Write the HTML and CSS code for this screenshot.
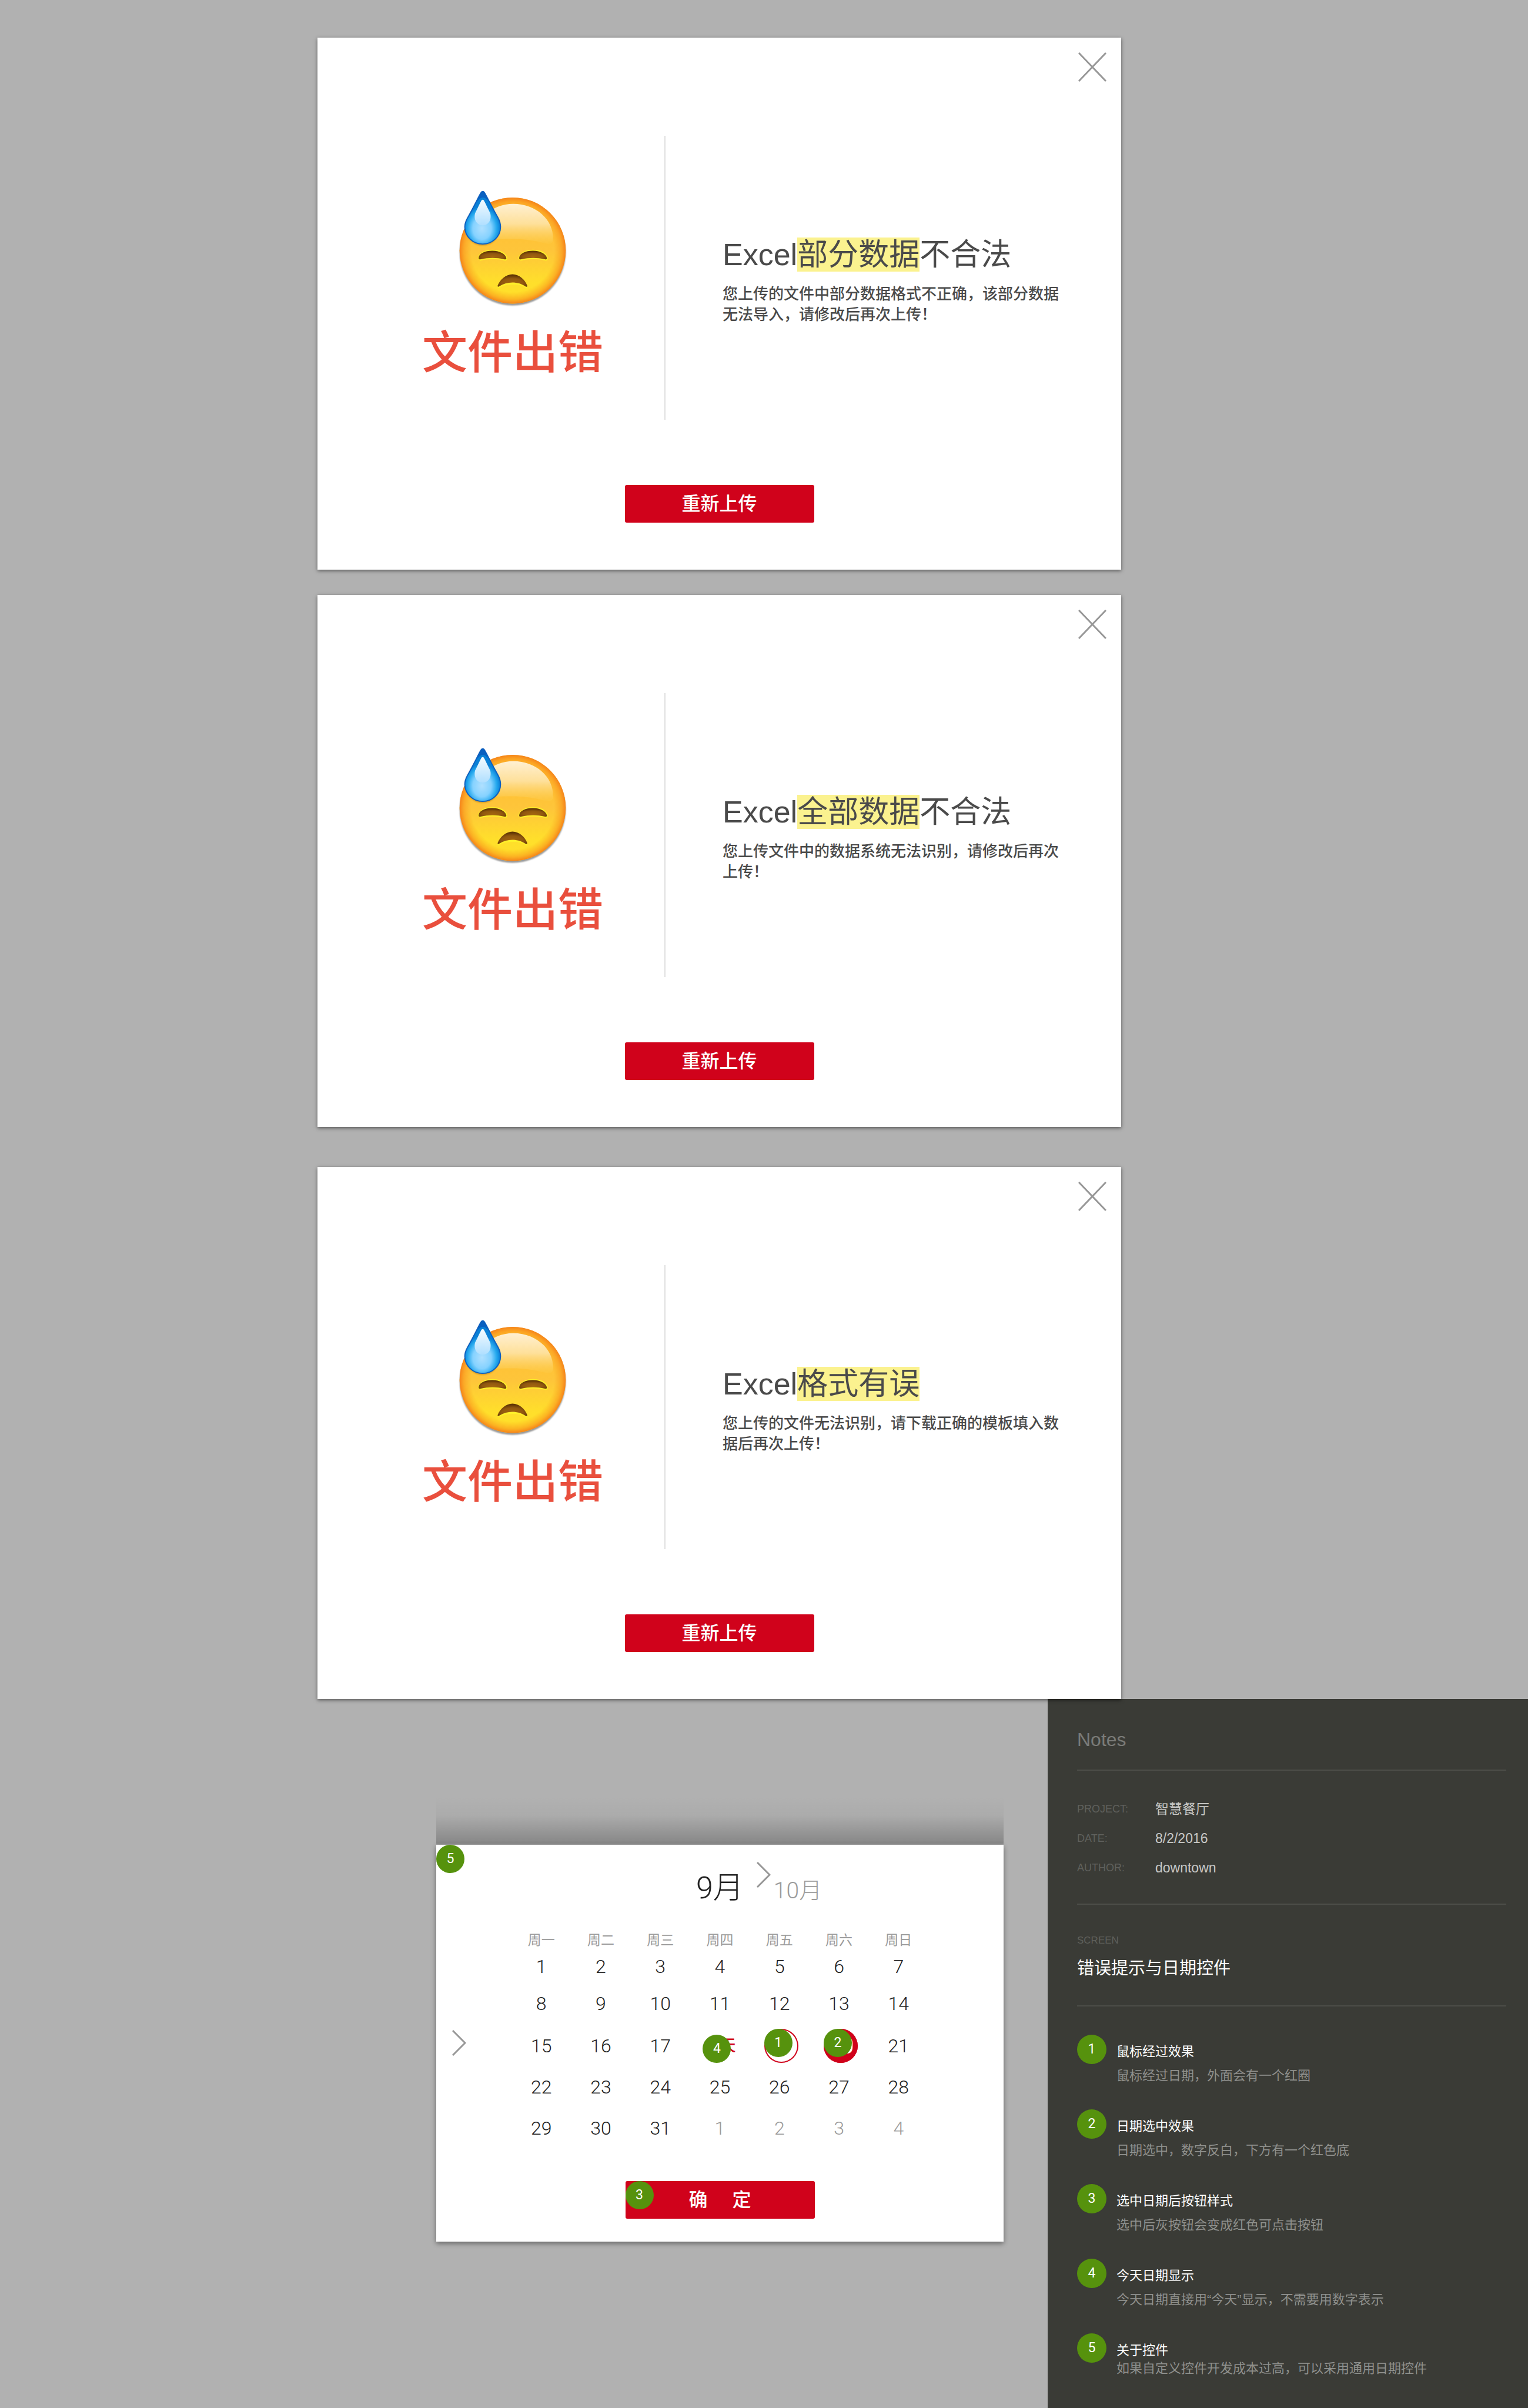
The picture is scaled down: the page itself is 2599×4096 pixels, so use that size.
FILE: index.html
```html
<!DOCTYPE html>
<html lang="zh-CN">
<head>
<meta charset="utf-8">
<meta name="viewport" content="width=device-width, initial-scale=1">
<title>错误提示与日期控件</title>
<link rel="stylesheet" href="styles.css">
</head>
<body>
<svg class="sprite" aria-hidden="true">
  <defs>
    <radialGradient id="face-fill" cx="50%" cy="50%" r="50%">
      <stop offset="0" stop-color="#f7a01c" stop-opacity="0"/>
      <stop offset="0.78" stop-color="#f9a01c" stop-opacity="0"/>
      <stop offset="0.92" stop-color="#f9951c" stop-opacity="0.6"/>
      <stop offset="1" stop-color="#f5821a"/>
    </radialGradient>
    <linearGradient id="face-base" x1="0" y1="0" x2="0" y2="1">
      <stop offset="0" stop-color="#ffbd2e"/>
      <stop offset="0.5" stop-color="#fec53a"/>
      <stop offset="0.8" stop-color="#ffdf2b"/>
      <stop offset="1" stop-color="#ffe02a"/>
    </linearGradient>
    <linearGradient id="face-shine" x1="0" y1="0" x2="0" y2="1">
      <stop offset="0" stop-color="#fff0d2"/>
      <stop offset="0.5" stop-color="#fee09a"/>
      <stop offset="1" stop-color="#fdc840" stop-opacity="0.5"/>
    </linearGradient>
    <radialGradient id="drop-fill" gradientUnits="userSpaceOnUse" cx="238" cy="305" r="116" gradientTransform="translate(0 -60) scale(1 1.2)">
      <stop offset="0" stop-color="#b0e0ff"/>
      <stop offset="0.5" stop-color="#85d2ff"/>
      <stop offset="0.8" stop-color="#25a8ee"/>
      <stop offset="1" stop-color="#0a80d6"/>
    </radialGradient>
    <linearGradient id="drop-shine" x1="0" y1="0" x2="0" y2="1">
      <stop offset="0" stop-color="#f4fbff"/>
      <stop offset="1" stop-color="#b0dfff"/>
    </linearGradient>
    <radialGradient id="brown" cx="50%" cy="70%" r="60%">
      <stop offset="0" stop-color="#a3650f"/>
      <stop offset="0.6" stop-color="#915810"/>
      <stop offset="1" stop-color="#613605"/>
    </radialGradient>
    <filter id="soft" x="-20%" y="-20%" width="140%" height="140%">
      <feGaussianBlur stdDeviation="4"/>
    </filter>
  </defs>
  <symbol id="sweat-face" viewBox="82 66 700 740">
    <circle cx="432" cy="458" r="336" fill="#000" opacity="0.4" filter="url(#soft)"/>
    <circle cx="432" cy="446" r="336" fill="url(#face-base)"/>
    <circle cx="432" cy="446" r="336" fill="url(#face-fill)"/>
    <path d="M200 380C190 250 300 150 436 150C580 150 690 250 688 370C687 398 676 410 640 401C560 381 500 373 430 373C340 373 260 380 200 380Z" fill="url(#face-shine)"/>
    <path d="M222 500C212 500 216 484 226 474C258 438 346 436 382 472C396 486 396 506 384 505C340 492 270 492 228 505Z" fill="none" stroke="#fff02a" stroke-width="10"/>
    <path d="M479 500C469 500 473 484 483 474C515 438 603 436 639 472C653 486 653 506 641 505C597 492 527 492 485 505Z" fill="none" stroke="#fff02a" stroke-width="10"/>
    <path d="M343 678C380 650 480 645 518 678" fill="none" stroke="#fff02a" stroke-width="12" stroke-linecap="round"/>
    <path d="M216 493C218 462 262 446 305 447C350 448 388 466 392 495C392 502 386 504 378 501C330 490 280 490 230 501C221 504 216 502 216 493Z" fill="url(#brown)"/>
    <path d="M473 493C475 462 519 446 562 447C607 448 645 466 649 495C649 502 643 504 635 501C587 490 537 490 487 501C478 504 473 502 473 493Z" fill="url(#brown)"/>
    <path d="M337 668C352 630 388 597 431 596C474 597 510 630 524 668C526 676 519 678 512 672C465 640 397 640 350 671C343 677 335 676 337 668Z" fill="url(#brown)"/>
    <path d="M232 86C238 74 248 74 254 86L342 244C376 310 335 414 242 414C149 414 108 310 142 244Z" fill="#8a4b00" opacity="0.35" filter="url(#soft)"/>
    <path d="M232 79C238 70 247 70 253 79C262 92 300 170 340 240C352 262 355 280 355 296C355 356 304 405 242 405C180 405 129 356 129 296C129 280 134 262 146 240C186 170 222 92 232 79Z" fill="url(#drop-fill)"/>
    <path d="M232 79C238 70 247 70 253 79C262 92 300 170 340 240C352 262 355 280 355 296C355 356 304 405 242 405C180 405 129 356 129 296C129 280 134 262 146 240C186 170 222 92 232 79Z" fill="none" stroke="#0c5fc0" stroke-width="7"/>
    <path d="M231 84C238 72 247 72 254 84L276 130C262 116 256 110 242 110C228 110 220 122 206 136Z" fill="#0a55b8" opacity="0.75"/>
    <path d="M234 129C239 123 245 123 250 129C262 152 278 185 290 210C300 250 280 286 242 286C204 286 184 250 194 210C206 185 222 152 234 129Z" fill="url(#drop-shine)"/>
  </symbol>
  <symbol id="cross" viewBox="0 0 48 50">
    <path d="M1 1L47 49M47 1L1 49" fill="none" stroke="#979797" stroke-width="3"/>
  </symbol>
  <symbol id="chevron" viewBox="0 0 24 44">
    <path d="M1 1L22 22L1 43" fill="none" stroke="#979797" stroke-width="3"/>
  </symbol>
</svg>

<main class="page">
  <div class="dialogs">
    <section class="dialog">
      <button class="dialog-close" type="button" aria-label="关闭"><svg><use href="#cross"/></svg></button>
      <div class="dialog-body">
        <div class="status">
          <svg class="status-face" aria-hidden="true"><use href="#sweat-face"/></svg>
          <p class="status-text">文件出错</p>
        </div>
        <div class="reason">
          <h2 class="reason-title">Excel<mark>部分数据</mark>不合法</h2>
          <p class="reason-text">您上传的文件中部分数据格式不正确，该部分数据无法导入，请修改后再次上传！</p>
        </div>
      </div>
      <button class="action" type="button">重新上传</button>
    </section>

    <section class="dialog">
      <button class="dialog-close" type="button" aria-label="关闭"><svg><use href="#cross"/></svg></button>
      <div class="dialog-body">
        <div class="status">
          <svg class="status-face" aria-hidden="true"><use href="#sweat-face"/></svg>
          <p class="status-text">文件出错</p>
        </div>
        <div class="reason">
          <h2 class="reason-title">Excel<mark>全部数据</mark>不合法</h2>
          <p class="reason-text">您上传文件中的数据系统无法识别，请修改后再次上传！</p>
        </div>
      </div>
      <button class="action" type="button">重新上传</button>
    </section>

    <section class="dialog dialog-last">
      <button class="dialog-close" type="button" aria-label="关闭"><svg><use href="#cross"/></svg></button>
      <div class="dialog-body">
        <div class="status">
          <svg class="status-face" aria-hidden="true"><use href="#sweat-face"/></svg>
          <p class="status-text">文件出错</p>
        </div>
        <div class="reason">
          <h2 class="reason-title">Excel<mark>格式有误</mark></h2>
          <p class="reason-text">您上传的文件无法识别，请下载正确的模板填入数据后再次上传！</p>
        </div>
      </div>
      <button class="action" type="button">重新上传</button>
    </section>
  </div>

  <div class="lower">
    <div class="calendar-area">
      <div class="calendar-shade"></div>
      <section class="calendar">
        <span class="badge">5</span>
        <button class="arrow arrow-side" type="button" aria-label="切换"><svg><use href="#chevron"/></svg></button>
        <div class="calendar-main">
          <div class="months">
            <h2 class="month-current">9月</h2>
            <button class="arrow" type="button" aria-label="下个月"><svg><use href="#chevron"/></svg></button>
            <span class="month-next">10月</span>
          </div>
          <table class="days">
            <thead>
              <tr><th>周一</th><th>周二</th><th>周三</th><th>周四</th><th>周五</th><th>周六</th><th>周日</th></tr>
            </thead>
            <tbody>
              <tr class="row-first"><td><button>1</button></td><td><button>2</button></td><td><button>3</button></td><td><button>4</button></td><td><button>5</button></td><td><button>6</button></td><td><button>7</button></td></tr>
              <tr class="row-second"><td><button>8</button></td><td><button>9</button></td><td><button>10</button></td><td><button>11</button></td><td><button>12</button></td><td><button>13</button></td><td><button>14</button></td></tr>
              <tr class="row-tall"><td><button>15</button></td><td><button>16</button></td><td><button>17</button></td><td><button class="today">今天<span class="badge">4</span></button></td><td class="marked"><button class="hovered">19<span class="badge">1</span></button></td><td class="marked"><button class="selected">20<span class="badge">2</span></button></td><td><button>21</button></td></tr>
              <tr><td><button>22</button></td><td><button>23</button></td><td><button>24</button></td><td><button>25</button></td><td><button>26</button></td><td><button>27</button></td><td><button>28</button></td></tr>
              <tr class="row-tall"><td><button>29</button></td><td><button>30</button></td><td><button>31</button></td><td class="outside"><button>1</button></td><td class="outside"><button>2</button></td><td class="outside"><button>3</button></td><td class="outside"><button>4</button></td></tr>
            </tbody>
          </table>
          <button class="action confirm" type="button"><span class="badge">3</span><span>确</span><span>定</span></button>
        </div>
      </section>
    </div>

    <aside class="notes">
      <h2 class="notes-heading">Notes</h2>
      <dl class="meta">
        <dt>PROJECT:</dt><dd>智慧餐厅</dd>
        <dt>DATE:</dt><dd>8/2/2016</dd>
        <dt>AUTHOR:</dt><dd>downtown</dd>
      </dl>
      <div class="screen">
        <p class="screen-label">SCREEN</p>
        <h3 class="screen-name">错误提示与日期控件</h3>
      </div>
      <ol class="note-list">
        <li class="note"><span class="note-number">1</span><div><h4>鼠标经过效果</h4><p>鼠标经过日期，外面会有一个红圈</p></div></li>
        <li class="note"><span class="note-number">2</span><div><h4>日期选中效果</h4><p>日期选中，数字反白，下方有一个红色底</p></div></li>
        <li class="note"><span class="note-number">3</span><div><h4>选中日期后按钮样式</h4><p>选中后灰按钮会变成红色可点击按钮</p></div></li>
        <li class="note"><span class="note-number">4</span><div><h4>今天日期显示</h4><p>今天日期直接用“今天”显示，不需要用数字表示</p></div></li>
        <li class="note note-compact"><span class="note-number">5</span><div><h4>关于控件</h4><p>如果自定义控件开发成本过高，可以采用通用日期控件</p></div></li>
      </ol>
    </aside>
  </div>
</main>
</body>
</html>
```
FILE: styles.css
```css
* {
  box-sizing: border-box;
  margin: 0;
  padding: 0;
}

body {
  background: #b1b1b1;
  color: #4a4a4a;
  font-family: "Liberation Sans", "Noto Sans CJK SC", sans-serif;
  font-size: 23px;
}

button {
  border: 0;
  background: none;
  color: inherit;
  font: inherit;
  cursor: pointer;
}

svg {
  display: block;
}

.sprite {
  position: absolute;
  width: 0;
  height: 0;
}

.page {
  display: flex;
  flex-direction: column;
  min-height: 100vh;
}

/* Error dialogs */

.dialogs {
  padding: 64px 692px 0 540px;
}

.dialog {
  position: relative;
  display: flex;
  flex-direction: column;
  align-items: center;
  margin-bottom: 43px;
  padding: 167px 0 80px;
  background: #fff;
  box-shadow: 0 2px 6px rgba(0, 0, 0, 0.5);
}

.dialog-last {
  margin-top: 68px;
  margin-bottom: 0;
}

.dialog-close {
  position: absolute;
  top: 25px;
  right: 25px;
}

.dialog-close svg {
  width: 48px;
  height: 50px;
}

.dialog-body {
  display: flex;
  align-self: stretch;
  min-height: 483px;
  margin-bottom: 111px;
}

.status {
  display: flex;
  flex-direction: column;
  align-items: center;
  gap: 32px;
  width: 590px;
  padding: 93px 0 0 74px;
}

.status-face {
  width: 188px;
  height: 199px;
}

.status-text {
  color: #e94f3d;
  font-size: 77px;
  font-weight: 500;
  line-height: 90px;
}

.reason {
  flex: 1;
  padding: 172px 0 0 97px;
  border-left: 2px solid #e0e0e0;
}

.reason-title {
  margin-bottom: 20px;
  font-size: 52px;
  font-weight: 400;
  line-height: 60px;
}

.reason-title mark {
  background: #fbf28f;
  color: inherit;
}

.reason-text {
  max-width: 574px;
  font-size: 26px;
  font-weight: 500;
  line-height: 35px;
}

.action {
  width: 322px;
  height: 64px;
  border-radius: 3px;
  background: #d0021b;
  color: #fff;
  font-size: 32px;
  font-weight: 500;
  line-height: 64px;
}

/* Date picker */

.lower {
  display: flex;
  flex: 1;
}

.calendar-area {
  flex: 1;
  padding: 166px 75px 0 742px;
}

.calendar-shade {
  height: 82px;
  border-bottom: 2px solid #a4a4a4;
  background: linear-gradient(rgba(0, 0, 0, 0), rgba(0, 0, 0, 0.03) 40%, rgba(0, 0, 0, 0.24));
}

.calendar {
  position: relative;
  display: grid;
  grid-template-columns: 128px 1fr 128px;
  padding: 29px 0 39px;
  background: #fff;
  box-shadow: 0 3px 8px rgba(0, 0, 0, 0.45);
}

.badge {
  position: absolute;
  top: 0;
  left: 0;
  width: 48px;
  height: 48px;
  border-radius: 50%;
  background: #56920d;
  color: #fff;
  font-family: Roboto, sans-serif;
  font-size: 23px;
  font-weight: 400;
  line-height: 48px;
  text-align: center;
}

.arrow svg {
  width: 24px;
  height: 44px;
}

.arrow-side {
  align-self: center;
  justify-self: start;
  margin: 8px 0 0 27px;
}

.calendar-main {
  display: flex;
  flex-direction: column;
  align-items: center;
}

.months {
  display: flex;
  align-items: flex-end;
  align-self: stretch;
  height: 75px;
  margin-bottom: 43px;
  padding-left: 314px;
  font-family: Roboto, "Noto Sans CJK SC", sans-serif;
}

.months .arrow {
  align-self: flex-start;
  margin: 0 5px 0 22px;
}

.month-current {
  color: #222;
  font-size: 52px;
  font-weight: 300;
  line-height: 60px;
}

.month-next {
  color: #9b9b9b;
  font-size: 39px;
  font-weight: 300;
  line-height: 51px;
}

.days {
  width: 100%;
  margin-bottom: 51px;
  border-collapse: collapse;
  table-layout: fixed;
}

.days th {
  height: 30px;
  color: #9b9b9b;
  font-size: 23px;
  font-weight: 400;
  line-height: 30px;
}

.days td {
  height: 62px;
  color: #222;
  font-family: Roboto, "Noto Sans CJK SC", sans-serif;
  font-size: 32px;
  font-weight: 300;
  line-height: 38px;
  text-align: center;
  vertical-align: middle;
}

.days .row-first td {
  height: 60px;
}

.days .row-second td {
  height: 66px;
}

.days .row-tall td {
  height: 78px;
}

.days td.outside {
  color: #9b9b9b;
}

.days td.marked {
  padding-left: 6px;
}

.days button {
  position: relative;
  display: block;
  width: 58px;
  margin: 0 auto;
}

.days .today {
  color: #d0021b;
  font-size: 27px;
  font-weight: 500;
}

.days .hovered,
.days .selected {
  height: 58px;
  border-radius: 50%;
  background: #fff;
  box-shadow: inset 0 0 0 2px #d0021b;
  font-size: 23px;
}

.days .selected {
  background: #d0021b;
  color: #fff;
  font-size: 39px;
  font-weight: 500;
}

.confirm {
  position: relative;
  display: flex;
  justify-content: center;
  gap: 42px;
}

/* Notes panel */

.notes {
  width: 817px;
  padding: 49px 37px 52px 50px;
  background: #3a3b36;
}

.notes-heading {
  padding-bottom: 31px;
  border-bottom: 2px solid #4c4d48;
  color: #7a7b78;
  font-size: 32px;
  font-weight: 400;
  line-height: 40px;
}

.meta {
  display: grid;
  grid-template-columns: 133px 1fr;
  padding: 40px 0 36px;
  border-bottom: 2px solid #4c4d48;
  line-height: 50px;
}

.meta dt {
  color: #5f605c;
  font-size: 18px;
}

.meta dd {
  color: #c8c8c6;
}

.screen {
  padding: 51px 0 43px;
  border-bottom: 2px solid #4c4d48;
}

.screen-label {
  margin-bottom: 17px;
  color: #5f605c;
  font-size: 17px;
  line-height: 20px;
}

.screen-name {
  color: #fff;
  font-size: 29px;
  font-weight: 400;
  line-height: 40px;
}

.note-list {
  display: flex;
  flex-direction: column;
  gap: 42px;
  padding-top: 48px;
  list-style: none;
}

.note {
  display: flex;
  gap: 17px;
  font-size: 22px;
}

.note-number {
  width: 50px;
  height: 50px;
  border-radius: 50%;
  background: #56920d;
  color: #fff;
  font-family: Roboto, sans-serif;
  font-size: 23px;
  line-height: 50px;
  text-align: center;
}

.note h4 {
  margin: 14px 0 11px;
  color: #fff;
  font-weight: 400;
  line-height: 30px;
}

.note p {
  color: #8f908d;
  font-weight: 400;
  line-height: 30px;
}

.note-compact h4 {
  margin-bottom: 1px;
}
```
